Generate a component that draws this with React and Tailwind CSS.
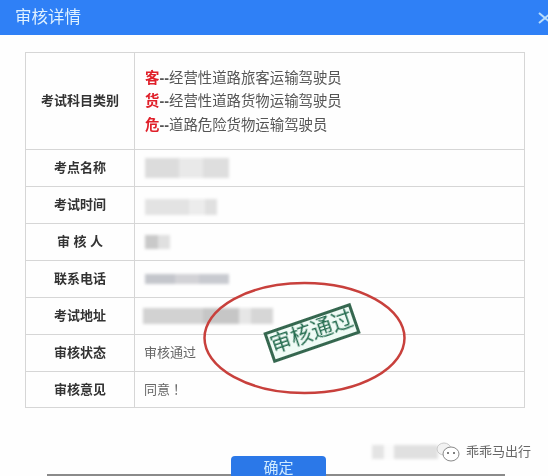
import React from 'react';

const cjk = "font-['Liberation_Sans','Noto_Sans_CJK_SC',sans-serif]";

const Mosaic = ({ className, tiles }) => (
  <div className={`flex blur-[1.5px] ${className}`}>
    {tiles.map((tile, index) => (
      <div key={index} className={tile} />
    ))}
  </div>
);

const subjects = [
  { mark: '客', rest: '经营性道路旅客运输驾驶员' },
  { mark: '货', rest: '经营性道路货物运输驾驶员' },
  { mark: '危', rest: '道路危险货物运输驾驶员' },
];

const Row = ({ label, className, children }) => (
  <div className={`flex border-b border-[#d6d6d6] last:border-b-0 ${className}`}>
    <div className="w-[109px] shrink-0 flex items-center justify-center border-r border-[#d6d6d6] text-[13px] font-semibold text-[#333]">
      {label}
    </div>
    <div className="flex-1 min-w-0 flex items-center pl-[9px] text-[13px] text-[#666]">{children}</div>
  </div>
);

const App = () => {
  return (
    <div className={`relative w-[548px] h-[476px] overflow-hidden bg-[#fefefe] ${cjk}`}>
      <div className="h-[35px] flex items-center justify-between pl-[15px] bg-[#2f80f6] blur-[0.4px]">
        <span className="text-[16.5px] text-[#dff1ff]">审核详情</span>
        <svg width="10" height="14" viewBox="0 0 10 14" className="mr-0">
          <path d="M1 2 L7 7 L1 12 M7 7 L13 2 M7 7 L13 12" stroke="#b8dcfb" strokeWidth="2" fill="none" />
        </svg>
      </div>

      <div className="ml-[25px] mt-[17px] w-[500px] border border-[#d6d6d6] blur-[0.3px]">
        <Row label="考试科目类别" className="h-[97px]">
          <div className="text-[14.4px] leading-[23.5px] text-[#555] pl-px pt-[2px]">
            {subjects.map(item => (
              <p key={item.mark}>
                <span className="font-bold text-[#e0202a]">{item.mark}</span>
                <span className="font-bold">--</span>
                {item.rest}
              </p>
            ))}
          </div>
        </Row>
        <Row label="考点名称" className="h-[37px]">
          <Mosaic
            className="h-[20px] ml-px"
            tiles={['w-[34px] bg-[#dcdcdc]', 'w-[24px] bg-[#e9e9e9]', 'w-[26px] bg-[#dedede]']}
          />
        </Row>
        <Row label="考试时间" className="h-[37px]">
          <Mosaic
            className="h-[16px] mt-[3px] ml-px"
            tiles={['w-[44px] bg-[#e3e3e3]', 'w-[16px] bg-[#ececec]', 'w-[12px] bg-[#e0e0e0]']}
          />
        </Row>
        <Row label="审 核 人" className="h-[37px]">
          <Mosaic className="h-[14px] ml-[1px]" tiles={['w-[13px] bg-[#c9c9c9]', 'w-[12px] bg-[#e0e0e0]']} />
        </Row>
        <Row label="联系电话" className="h-[37px]">
          <Mosaic
            className="h-[10px] ml-[1px]"
            tiles={['w-[30px] bg-[#c4c6cc]', 'w-[24px] bg-[#d2d2d6]', 'w-[30px] bg-[#c8cad0]']}
          />
        </Row>
        <Row label="考试地址" className="h-[37px]">
          <Mosaic
            className="h-[16px] ml-[-1px]"
            tiles={['w-[60px] bg-[#d2d2d2]', 'w-[36px] bg-[#c6c6c6]', 'w-[12px] bg-[#e6e6e6]', 'w-[22px] bg-[#d6d6d6]']}
          />
        </Row>
        <Row label="审核状态" className="h-[37px]">审核通过</Row>
        <Row label="审核意见" className="h-[35px]">
          同意<span className="ml-[3px]">！</span>
        </Row>
      </div>

      <div className="mt-[48px] flex justify-center pl-[9px]">
        <button className="w-[95px] h-[30px] rounded-t-[4px] bg-[#2b78e8] text-[15px] text-[#cfeaff] pb-[6px] blur-[0.4px]">确定</button>
      </div>

      <div className="absolute left-[47px] bottom-0 w-[184px] h-[2px] bg-[#8a8a8a]" />
      <div className="absolute left-[326px] bottom-0 w-[179px] h-[2px] bg-[#8a8a8a]" />

      {/* red circle drawn over the table */}
      <svg className="absolute left-[200px] top-[279px] blur-[0.4px]" width="210" height="120" viewBox="0 0 210 120">
        <ellipse cx="104.5" cy="59" rx="100" ry="55" fill="none" stroke="#c8403c" strokeWidth="2.5" />
      </svg>

      {/* stamp */}
      <div className="absolute left-[266px] top-[317px] w-[92px] h-[32px] -rotate-[19deg] flex items-center justify-center border-[3px] border-[#35674f] bg-[#f0fbf6] text-[21.5px] leading-none text-[#236b4e] blur-[0.3px]">
        审核通过
      </div>

      {/* watermark */}
      <div className="absolute left-[372px] top-[441px] flex items-center">
        <Mosaic className="h-[14px]" tiles={['w-[12px] bg-[#e4e4e4]', 'w-[10px] bg-[#fbfbfb]', 'w-[44px] bg-[#e0e0e0]']} />
        <svg width="26" height="22" viewBox="0 0 26 22" className="ml-[-3px] blur-[0.4px]">
          <ellipse cx="9" cy="8" rx="7" ry="6" fill="#f2f2f2" stroke="#c8c8c8" />
          <ellipse cx="16" cy="13" rx="8" ry="7" fill="#fff" stroke="#888" />
          <circle cx="13" cy="12" r="1" fill="#555" />
          <circle cx="19" cy="12" r="1" fill="#555" />
        </svg>
        <span className="text-[13px] text-[#666] ml-[5px] blur-[0.4px]">乖乖马出行</span>
      </div>
    </div>
  );
};

export default App;
